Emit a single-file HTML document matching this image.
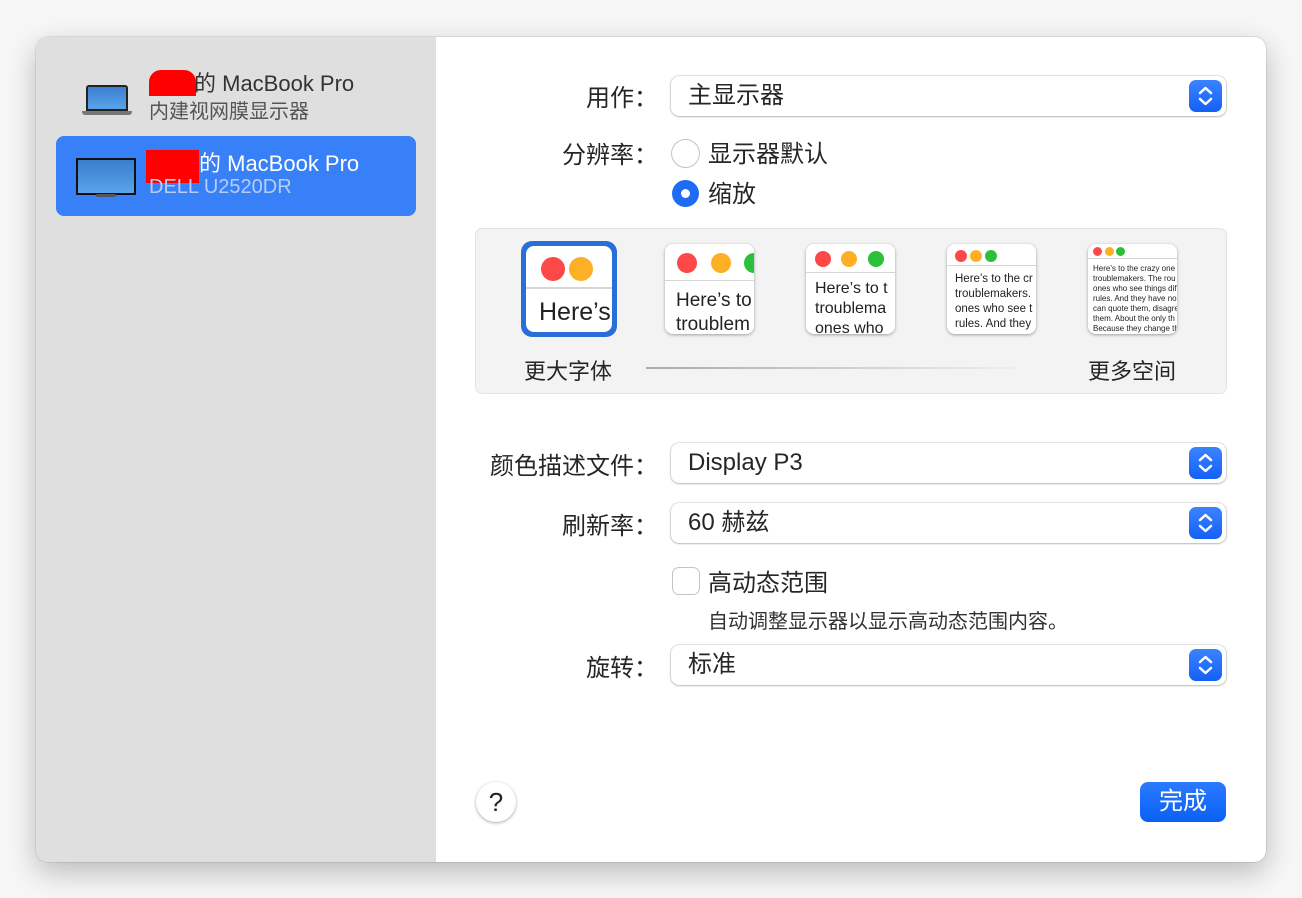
<!DOCTYPE html>
<html><head><meta charset="utf-8"><style>
*{box-sizing:border-box;margin:0;padding:0}
body{width:1302px;height:898px;background:#f7f7f7;font-family:"Liberation Sans","Noto Sans CJK SC",sans-serif;position:relative;overflow:hidden;color:#262626}
.win{position:absolute;left:36px;top:37px;width:1230px;height:825px;border-radius:12px;background:#fff;overflow:hidden;box-shadow:0 10px 30px rgba(0,0,0,.25),0 0 0 1px rgba(0,0,0,.08)}
.side{position:absolute;left:0;top:0;width:400px;height:100%;background:#dfdfdf}
.abs{position:absolute}
.lbl{position:absolute;font-size:24px;text-align:right;width:240px;color:#262626}
.pop{position:absolute;left:635px;width:555px;height:40px;border-radius:8px;background:#fff;box-shadow:0 0.5px 2px rgba(0,0,0,.35),0 0 0 0.5px rgba(0,0,0,.1);font-size:24px;padding-left:17px;line-height:40px}
.step{position:absolute;right:4px;top:4px;width:33px;height:32px;border-radius:7px;background:linear-gradient(#3a84ff,#1560f5)}
.radio{position:absolute;width:27px;height:27px;border-radius:50%;background:#fff;box-shadow:0 0 0 1px #c4c4c4,0 1px 1px rgba(0,0,0,.1)}
.thumb{position:absolute;background:#fff;border-radius:8px;overflow:hidden;box-shadow:0 1px 3px rgba(0,0,0,.35)}
.dot{position:absolute;border-radius:50%}
.bar{position:absolute;left:0;right:0;border-bottom:1px solid #d5d5d5}
.tt{position:absolute;white-space:nowrap;color:#222}
</style></head><body>
<div class="win">
<div class="side">
  <div class="abs" style="left:50px;top:48px;width:42px;height:26px;background:#222;border-radius:3px 3px 0 0;padding:2px"><div style="width:100%;height:100%;background:linear-gradient(#3a7fd0,#5aa3ea)"></div></div>
  <div class="abs" style="left:46px;top:74px;width:50px;height:4px;background:#777;border-radius:0 0 3px 3px"></div>
  <div class="abs" style="left:113px;top:33px;width:47px;height:26px;background:#f00;border-radius:12px 12px 0 0"></div>
  <div class="abs" style="left:158px;top:29px;font-size:22px;color:#333">的 MacBook Pro</div>
  <div class="abs" style="left:113px;top:58px;font-size:20px;color:#555">内建视网膜显示器</div>
  <div class="abs" style="left:20px;top:99px;width:360px;height:80px;background:#3780f8;border-radius:8px"></div>
  <div class="abs" style="left:40px;top:121px;width:60px;height:37px;background:#111;padding:2px"><div style="width:100%;height:100%;background:linear-gradient(#3a7dcc,#5aa3ea)"></div></div>
  <div class="abs" style="left:60px;top:157px;width:20px;height:3px;background:#555;border-radius:2px"></div>
  <div class="abs" style="left:110px;top:113px;width:53px;height:33px;background:#f00"></div>
  <div class="abs" style="left:163px;top:109px;font-size:22px;color:#fff">的 MacBook Pro</div>
  <div class="abs" style="left:113px;top:139px;font-size:20px;color:#b5cef9">DELL U2520DR</div>
</div>

<div class="lbl" style="left:382px;top:41px">用作：</div>
<div class="pop" style="top:39px">主显示器<div class="step"><svg width="33" height="32" viewBox="0 0 33 32"><path d="M11 13l5.5-5 5.5 5M11 19l5.5 5 5.5-5" stroke="#fff" stroke-width="2.5" fill="none" stroke-linecap="round" stroke-linejoin="round"/></svg></div></div>

<div class="lbl" style="left:382px;top:98px">分辨率：</div>
<div class="radio" style="left:636px;top:103px"></div>
<div class="abs" style="left:672px;top:97px;font-size:24px">显示器默认</div>
<div class="radio" style="left:636px;top:143px;background:#1e6bf5;box-shadow:none"><div style="position:absolute;left:9px;top:9px;width:9px;height:9px;border-radius:50%;background:#fff"></div></div>
<div class="abs" style="left:672px;top:137px;font-size:24px">缩放</div>

<div class="abs" style="left:440px;top:192px;width:750px;height:164px;background:#f3f3f3;border-radius:6px;box-shadow:0 0 0 1px #e4e4e4"></div>
<div class="abs" style="left:485px;top:204px;width:96px;height:96px;border-radius:11px;background:#2a6fd8"></div>
<div class="thumb" style="left:490px;top:209px;width:86px;height:86px;box-shadow:none">
  <div class="dot" style="left:15px;top:11px;width:24px;height:24px;background:#fd4848"></div>
  <div class="dot" style="left:43px;top:11px;width:24px;height:24px;background:#fdb026"></div>
  <div class="bar" style="top:0;height:43px;border-bottom:2px solid #d5d5d5"></div>
  <div class="tt" style="left:13px;top:52px;font-size:25px">Here’s</div>
</div>
<div class="thumb" style="left:629px;top:207px;width:89px;height:90px">
  <div class="dot" style="left:12px;top:9px;width:20px;height:20px;background:#fd4848"></div>
  <div class="dot" style="left:46px;top:9px;width:20px;height:20px;background:#fdb026"></div>
  <div class="dot" style="left:79px;top:9px;width:20px;height:20px;background:#2ac03a"></div>
  <div class="bar" style="top:0;height:37px"></div>
  <div class="tt" style="left:11px;top:45px;font-size:19px;line-height:24px">Here’s to<br>troublem</div>
</div>
<div class="thumb" style="left:770px;top:207px;width:89px;height:90px">
  <div class="dot" style="left:9px;top:7px;width:16px;height:16px;background:#fd4848"></div>
  <div class="dot" style="left:35px;top:7px;width:16px;height:16px;background:#fdb026"></div>
  <div class="dot" style="left:62px;top:7px;width:16px;height:16px;background:#2ac03a"></div>
  <div class="bar" style="top:0;height:29px"></div>
  <div class="tt" style="left:9px;top:35px;font-size:16px;line-height:20px">Here’s to t<br>troublema<br>ones who</div>
</div>
<div class="thumb" style="left:911px;top:207px;width:89px;height:90px">
  <div class="dot" style="left:8px;top:6px;width:12px;height:12px;background:#fd4848"></div>
  <div class="dot" style="left:23px;top:6px;width:12px;height:12px;background:#fdb026"></div>
  <div class="dot" style="left:38px;top:6px;width:12px;height:12px;background:#2ac03a"></div>
  <div class="bar" style="top:0;height:22px"></div>
  <div class="tt" style="left:8px;top:28px;font-size:11.5px;line-height:15px">Here’s to the cr<br>troublemakers.<br>ones who see t<br>rules. And they</div>
</div>
<div class="thumb" style="left:1052px;top:207px;width:89px;height:90px">
  <div class="dot" style="left:5px;top:3px;width:9px;height:9px;background:#fd4848"></div>
  <div class="dot" style="left:17px;top:3px;width:9px;height:9px;background:#fdb026"></div>
  <div class="dot" style="left:28px;top:3px;width:9px;height:9px;background:#2ac03a"></div>
  <div class="bar" style="top:0;height:15px"></div>
  <div class="tt" style="left:5px;top:20px;font-size:8px;line-height:10px">Here's to the crazy one<br>troublemakers. The rou<br>ones who see things dif<br>rules. And they have no<br>can quote them, disagre<br>them. About the only th<br>Because they change th</div>
</div>
<div class="abs" style="left:488px;top:317px;font-size:22px">更大字体</div>
<div class="abs" style="left:1052px;top:317px;font-size:22px">更多空间</div>
<div class="abs" style="left:610px;top:330px;width:370px;height:2px;background:linear-gradient(90deg,#aaa,#eee)"></div>

<div class="lbl" style="left:382px;top:409px">颜色描述文件：</div>
<div class="pop" style="top:406px">Display P3<div class="step"><svg width="33" height="32" viewBox="0 0 33 32"><path d="M11 13l5.5-5 5.5 5M11 19l5.5 5 5.5-5" stroke="#fff" stroke-width="2.5" fill="none" stroke-linecap="round" stroke-linejoin="round"/></svg></div></div>

<div class="lbl" style="left:382px;top:469px">刷新率：</div>
<div class="pop" style="top:466px">60 赫兹<div class="step"><svg width="33" height="32" viewBox="0 0 33 32"><path d="M11 13l5.5-5 5.5 5M11 19l5.5 5 5.5-5" stroke="#fff" stroke-width="2.5" fill="none" stroke-linecap="round" stroke-linejoin="round"/></svg></div></div>

<div class="abs" style="left:637px;top:531px;width:26px;height:26px;border-radius:6px;background:#fff;box-shadow:0 0 0 1px #c4c4c4"></div>
<div class="abs" style="left:672px;top:526px;font-size:24px">高动态范围</div>
<div class="abs" style="left:672px;top:568px;font-size:20px;color:#333">自动调整显示器以显示高动态范围内容。</div>

<div class="lbl" style="left:382px;top:611px">旋转：</div>
<div class="pop" style="top:608px">标准<div class="step"><svg width="33" height="32" viewBox="0 0 33 32"><path d="M11 13l5.5-5 5.5 5M11 19l5.5 5 5.5-5" stroke="#fff" stroke-width="2.5" fill="none" stroke-linecap="round" stroke-linejoin="round"/></svg></div></div>

<div class="abs" style="left:440px;top:745px;width:40px;height:40px;border-radius:50%;background:#fff;box-shadow:0 1px 3px rgba(0,0,0,.35);text-align:center;line-height:40px;font-size:26px;color:#222">?</div>
<div class="abs" style="left:1104px;top:745px;width:86px;height:40px;border-radius:8px;background:linear-gradient(#2b7bff,#0a60f5);color:#fff;text-align:center;line-height:40px;font-size:24px">完成</div>
</div>
</body></html>
